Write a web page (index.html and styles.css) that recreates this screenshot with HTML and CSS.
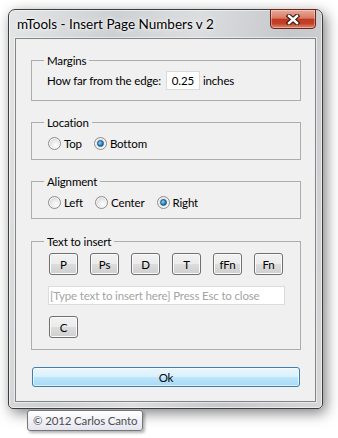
FILE: index.html
```html
<!DOCTYPE html>
<html lang="en">
<head>
  <meta charset="UTF-8">
  <title>mTools - Insert Page Numbers v 2</title>
  <link rel="stylesheet" href="styles.css">
</head>
<body>
  <div class="window">
    <div class="titlebar">
      <span class="title">mTools - Insert Page Numbers v 2</span>
      <button type="button" class="close" aria-label="Close">
        <svg width="14" height="11" viewBox="0 0 14 11">
          <path d="M3 2 L11 9 M11 2 L3 9" stroke="#3a1b15" stroke-width="4.6" stroke-linecap="square"/>
          <path d="M3 2 L11 9 M11 2 L3 9" stroke="#fff" stroke-width="2.4" stroke-linecap="square"/>
        </svg>
      </button>
    </div>
    <div class="client">
      <fieldset class="group margins">
        <legend>Margins</legend>
        <div class="row">
          <label for="edge" class="edge-label">How far from the edge:</label>
          <input type="text" id="edge" class="num" value="0.25">
          <span>inches</span>
        </div>
      </fieldset>

      <fieldset class="group">
        <legend>Location</legend>
        <div class="radios">
          <span class="opt"><span class="radio"></span>Top</span>
          <span class="opt"><span class="radio checked"></span>Bottom</span>
        </div>
      </fieldset>

      <fieldset class="group">
        <legend>Alignment</legend>
        <div class="radios">
          <span class="opt"><span class="radio"></span>Left</span>
          <span class="opt"><span class="radio"></span>Center</span>
          <span class="opt"><span class="radio checked"></span>Right</span>
        </div>
      </fieldset>

      <fieldset class="group insert-group">
        <legend>Text to insert</legend>
        <div class="tools">
          <button type="button" class="btn">P</button>
          <button type="button" class="btn">Ps</button>
          <button type="button" class="btn">D</button>
          <button type="button" class="btn">T</button>
          <button type="button" class="btn">fFn</button>
          <button type="button" class="btn">Fn</button>
        </div>
        <input type="text" class="insert" placeholder="[Type text to insert here] Press Esc to close">
        <button type="button" class="btn btn-c">C</button>
      </fieldset>

      <button type="button" class="ok">Ok</button>
    </div>
  </div>
  <div class="tooltip">© 2012 Carlos Canto</div>
</body>
</html>
```

FILE: styles.css
```css
/* Page */
body {
  margin: 0;
  width: 338px;
  height: 438px;
  overflow: hidden;
  position: relative;
  background: #fff;
  font-family: Lato, "Noto Sans", sans-serif;
  font-size: 11.5px;
  letter-spacing: -0.15px;
  color: #000;
}
button,
input {
  font-family: inherit;
  font-size: 11.5px;
  letter-spacing: -0.15px;
  color: #000;
}
/* Window frame */
.window {
  margin: 9px 0 0 8px;
  width: 315px;
  height: 400px;
  box-sizing: border-box;
  border: 1px solid #3e3e3e;
  border-radius: 7px 7px 5px 5px;
  padding: 0 6px 6px;
  display: flex;
  flex-direction: column;
  background: linear-gradient(100deg, #e4e5e6 0%, #cdd0d2 28%, #dcdddf 50%, #c6c8cb 74%, #d6d7d9 100%);
  box-shadow: inset 0 0 0 1px rgba(255,255,255,0.55), 3px 4px 14px rgba(0,0,0,0.5);
}
.titlebar {
  height: 28px;
  display: flex;
  align-items: center;
  padding-left: 2px;
}
.title {
  flex: 1;
  font-size: 13.5px;
  letter-spacing: 0;
  text-shadow: 0 0 6px #fff, 0 0 3px #fff;
}
.close {
  align-self: flex-start;
  margin-top: -1px;
  width: 46px;
  height: 20px;
  padding: 0;
  border: 1px solid #6b2518;
  border-radius: 0 0 4px 4px;
  display: flex;
  align-items: center;
  justify-content: center;
  background: linear-gradient(#e9a897 0%, #d87b64 45%, #c2391f 52%, #c44129 75%, #dd8a70 100%);
  box-shadow: inset 0 0 0 1px rgba(255,255,255,0.35);
}
/* Client area */
.client {
  flex: 1;
  background: #f0f0f0;
  border: 1px solid #838383;
  padding: 14px 14px 0 15px;
  display: flex;
  flex-direction: column;
  box-shadow: 0 0 0 1px rgba(255,255,255,0.5);
}
.group {
  margin: 0 0 14px;
  padding: 4px 14px 7px 16px;
  border: 1px solid #adadad;
  min-width: 0;
}
.group legend {
  padding: 0 3px;
  margin-left: -4px;
  line-height: 15px;
}
.margins {
  padding-top: 3px;
  padding-bottom: 10px;
}
.row {
  display: flex;
  align-items: center;
  height: 19px;
}
.edge-label {
  margin-left: -1px;
  margin-right: 5px;
}
.num {
  width: 34px;
  height: 19px;
  box-sizing: border-box;
  border: 1px solid #dadada;
  background: #fff;
  text-align: center;
  padding: 0;
  margin-right: 3px;
}
/* Radio buttons */
.radios {
  display: flex;
  align-items: center;
  height: 18px;
  gap: 12px;
}
.opt {
  display: flex;
  align-items: center;
  gap: 3px;
}
.radio {
  position: relative;
  width: 13px;
  height: 13px;
  box-sizing: border-box;
  border-radius: 50%;
  border: 1px solid #8c8e90;
  background: radial-gradient(circle at 60% 65%, #ffffff 0%, #e8e8e8 45%, #c9c9c9 100%);
  box-shadow: inset 0 0 0 1px #f6f6f6;
}
.radio.checked::after {
  content: "";
  position: absolute;
  left: 2px;
  top: 2px;
  width: 7px;
  height: 7px;
  box-sizing: border-box;
  border-radius: 50%;
  border: 1px solid #1c4f7c;
  background: radial-gradient(circle at 35% 35%, #8fd3f7 0%, #2d8dd0 50%, #0f4f88 100%);
}
/* Text to insert */
.insert-group {
  margin-top: 1px;
  padding-bottom: 11px;
}
.tools {
  display: flex;
  gap: 12px;
  margin-left: 1px;
}
.btn {
  width: 29px;
  height: 22px;
  box-sizing: border-box;
  padding: 0;
  border: 1px solid #707070;
  border-radius: 3px;
  background: linear-gradient(#f2f2f2 0%, #ebebeb 50%, #dddddd 50%, #cfcfcf 100%);
  box-shadow: inset 0 0 0 1px #fbfbfb;
}
.insert {
  display: block;
  width: 237px;
  height: 19px;
  box-sizing: border-box;
  margin-top: 11px;
  padding: 0 1px;
  border: 1px solid #dcdcdc;
  background: #fff;
}
.insert::placeholder {
  color: #a3a3a3;
}
.btn-c {
  display: block;
  margin: 11px 0 0 1px;
}
.ok {
  margin: 3px 1px 0;
  height: 20px;
  padding: 0;
  border: 1px solid #3c7fb1;
  border-radius: 3px;
  background: linear-gradient(#eaf6fd 0%, #d9f0fc 50%, #bee6fd 50%, #a7d9f5 100%);
  box-shadow: inset 0 0 0 1px rgba(255,255,255,0.6);
}
/* Tooltip sits over the window edge */
.tooltip {
  position: absolute;
  left: 27px;
  top: 410px;
  height: 21px;
  box-sizing: border-box;
  padding: 0 5px;
  line-height: 19px;
  border: 1px solid #767676;
  border-radius: 3px;
  background: linear-gradient(#ffffff, #e4e5f0);
  color: #4f4f4f;
  box-shadow: 2px 2px 3px rgba(0,0,0,0.3);
}
```
